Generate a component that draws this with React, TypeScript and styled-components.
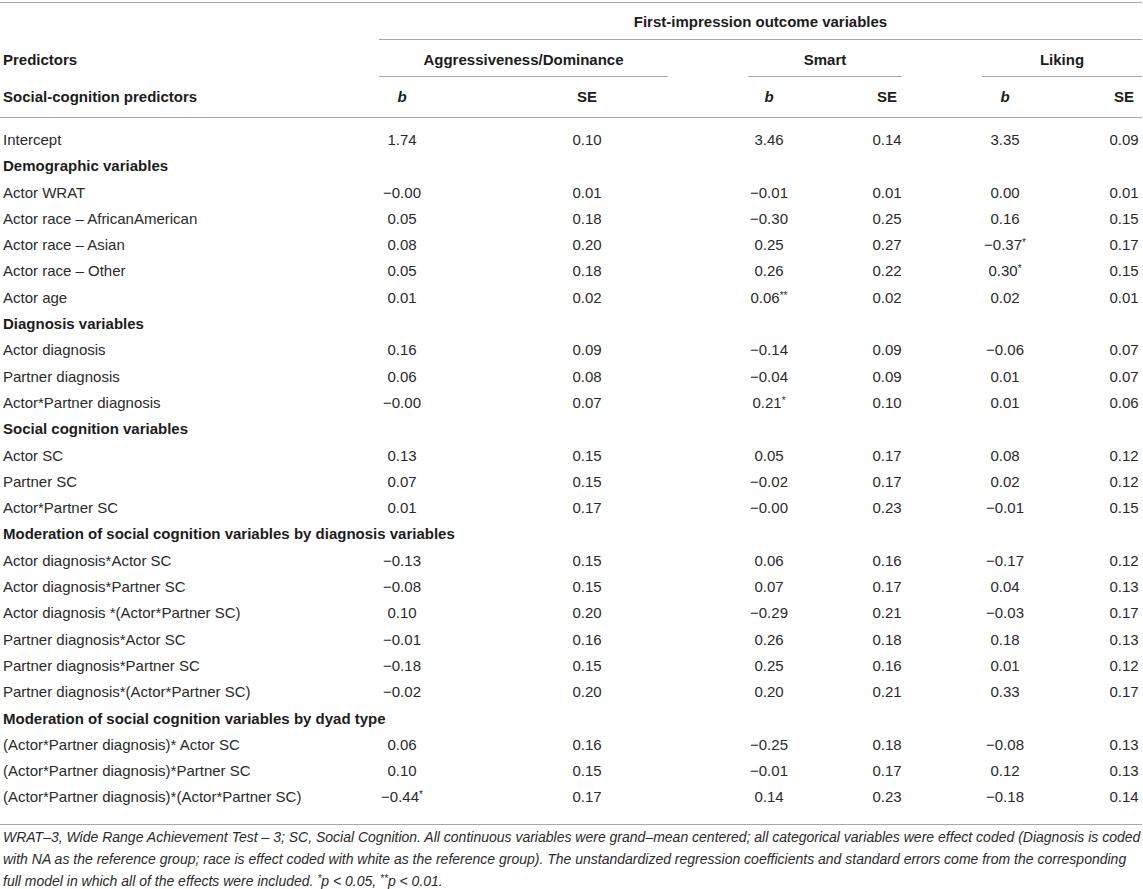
import React from 'react';
import styled, { createGlobalStyle, css } from 'styled-components';

const GlobalStyle = createGlobalStyle`
  html, body { margin: 0; padding: 0; background: #ffffff; }
  body {
    font-family: "Liberation Sans", Arial, Helvetica, sans-serif;
    color: #222222;
    -webkit-font-smoothing: antialiased;
  }
`;

const RULE = '1px solid #a8a8a8';

/* column lines: 0 | 379 | 425 | 564 | 610 | 668 | 748 | 790 | 866 | 908 | 982 | 1028 | 1106 | 1142 */
const tracks = css`
  display: grid;
  grid-template-columns: 379px 46px 139px 46px 58px 80px 42px 76px 42px 74px 46px 78px 36px;
`;

const Page = styled.div`
  padding-top: 2px;
  width: 1142px;
`;

const Table = styled.div`
  border-top: ${RULE};
  font-size: 15px;
`;

const HeadRow = styled.div<{ $rule?: boolean }>`
  ${tracks};
  border-bottom: ${(p) => (p.$rule ? RULE : 'none')};
`;

const HeadLabel = styled.div<{ $pad: string }>`
  grid-column: 1;
  padding: ${(p) => p.$pad};
  padding-left: 3px;
  line-height: 18px;
  font-weight: 700;
  color: #1c1c1c;
  align-self: start;
`;

const SpanHead = styled.div<{ $from: number; $to: number; $trim?: number }>`
  grid-column: ${(p) => p.$from} / ${(p) => p.$to};
  margin-right: ${(p) => p.$trim ?? 0}px;
  padding: 11px 0 7px;
  line-height: 18px;
  text-align: center;
  font-weight: 700;
  color: #1c1c1c;
  border-bottom: ${RULE};
`;

const TopSpan = styled(SpanHead)`
  padding: 10px 0 8px;
`;

const StatHead = styled.div<{ $col: number; $italic?: boolean }>`
  grid-column: ${(p) => p.$col};
  display: flex;
  justify-content: center;
  padding: 11px 0;
  line-height: 18px;
  font-weight: 700;
  font-style: ${(p) => (p.$italic ? 'italic' : 'normal')};
  color: #1c1c1c;
  white-space: nowrap;
`;

const Body = styled.div`
  padding: 9px 0 13px;
  border-bottom: ${RULE};
`;

const Row = styled.div`
  ${tracks};
  height: 26.3px;
  line-height: 26.3px;
`;

const Label = styled.div<{ $section?: boolean }>`
  grid-column: ${(p) => (p.$section ? '1 / 14' : '1')};
  padding-left: 3px;
  white-space: nowrap;
  font-weight: ${(p) => (p.$section ? 700 : 400)};
  color: ${(p) => (p.$section ? '#1c1c1c' : '#2a2a2a')};
`;

const Value = styled.div<{ $col: number }>`
  grid-column: ${(p) => p.$col};
  display: flex;
  justify-content: center;
  white-space: nowrap;
  color: #2a2a2a;
`;

const NumText = styled.span`
  display: inline;
`;

const Sup = styled.sup`
  font-size: 10px;
  line-height: 0;
  vertical-align: 4px;
`;

const Note = styled.p`
  margin: 0;
  padding: 1px 0 0 3px;
  font-size: 14px;
  line-height: 22px;
  font-style: italic;
  color: #2a2a2a;
  white-space: nowrap;
`;

const VALUE_COLS = [2, 4, 7, 9, 11, 13];

type DataRow = { label: string; values?: string[]; section?: boolean };

const rows: DataRow[] = [
  { label: 'Intercept', values: ['1.74', '0.10', '3.46', '0.14', '3.35', '0.09'] },
  { label: 'Demographic variables', section: true },
  { label: 'Actor WRAT', values: ['−0.00', '0.01', '−0.01', '0.01', '0.00', '0.01'] },
  { label: 'Actor race – AfricanAmerican', values: ['0.05', '0.18', '−0.30', '0.25', '0.16', '0.15'] },
  { label: 'Actor race – Asian', values: ['0.08', '0.20', '0.25', '0.27', '−0.37*', '0.17'] },
  { label: 'Actor race – Other', values: ['0.05', '0.18', '0.26', '0.22', '0.30*', '0.15'] },
  { label: 'Actor age', values: ['0.01', '0.02', '0.06**', '0.02', '0.02', '0.01'] },
  { label: 'Diagnosis variables', section: true },
  { label: 'Actor diagnosis', values: ['0.16', '0.09', '−0.14', '0.09', '−0.06', '0.07'] },
  { label: 'Partner diagnosis', values: ['0.06', '0.08', '−0.04', '0.09', '0.01', '0.07'] },
  { label: 'Actor*Partner diagnosis', values: ['−0.00', '0.07', '0.21*', '0.10', '0.01', '0.06'] },
  { label: 'Social cognition variables', section: true },
  { label: 'Actor SC', values: ['0.13', '0.15', '0.05', '0.17', '0.08', '0.12'] },
  { label: 'Partner SC', values: ['0.07', '0.15', '−0.02', '0.17', '0.02', '0.12'] },
  { label: 'Actor*Partner SC', values: ['0.01', '0.17', '−0.00', '0.23', '−0.01', '0.15'] },
  { label: 'Moderation of social cognition variables by diagnosis variables', section: true },
  { label: 'Actor diagnosis*Actor SC', values: ['−0.13', '0.15', '0.06', '0.16', '−0.17', '0.12'] },
  { label: 'Actor diagnosis*Partner SC', values: ['−0.08', '0.15', '0.07', '0.17', '0.04', '0.13'] },
  { label: 'Actor diagnosis *(Actor*Partner SC)', values: ['0.10', '0.20', '−0.29', '0.21', '−0.03', '0.17'] },
  { label: 'Partner diagnosis*Actor SC', values: ['−0.01', '0.16', '0.26', '0.18', '0.18', '0.13'] },
  { label: 'Partner diagnosis*Partner SC', values: ['−0.18', '0.15', '0.25', '0.16', '0.01', '0.12'] },
  { label: 'Partner diagnosis*(Actor*Partner SC)', values: ['−0.02', '0.20', '0.20', '0.21', '0.33', '0.17'] },
  { label: 'Moderation of social cognition variables by dyad type', section: true },
  { label: '(Actor*Partner diagnosis)* Actor SC', values: ['0.06', '0.16', '−0.25', '0.18', '−0.08', '0.13'] },
  { label: '(Actor*Partner diagnosis)*Partner SC', values: ['0.10', '0.15', '−0.01', '0.17', '0.12', '0.13'] },
  { label: '(Actor*Partner diagnosis)*(Actor*Partner SC)', values: ['−0.44*', '0.17', '0.14', '0.23', '−0.18', '0.14'] },
];

function Num({ text }: { text: string }) {
  const m = text.match(/^([^*]*)(\**)$/);
  const base = m ? m[1] : text;
  const stars = m ? m[2] : '';
  return (
    <NumText>
      {base}
      {stars && <Sup>{stars}</Sup>}
    </NumText>
  );
}

export default function App() {
  return (
    <Page>
      <GlobalStyle />
      <Table>
        <HeadRow>
          <TopSpan $from={2} $to={14}>First-impression outcome variables</TopSpan>
        </HeadRow>
        <HeadRow>
          <HeadLabel $pad="11px 0 7px">Predictors</HeadLabel>
          <SpanHead $from={2} $to={6}>Aggressiveness/Dominance</SpanHead>
          <SpanHead $from={7} $to={10} $trim={6}>Smart</SpanHead>
          <SpanHead $from={11} $to={14}>Liking</SpanHead>
        </HeadRow>
        <HeadRow $rule>
          <HeadLabel $pad="11px 0 11px">Social-cognition predictors</HeadLabel>
          <StatHead $col={2} $italic>b</StatHead>
          <StatHead $col={4}>SE</StatHead>
          <StatHead $col={7} $italic>b</StatHead>
          <StatHead $col={9}>SE</StatHead>
          <StatHead $col={11} $italic>b</StatHead>
          <StatHead $col={13}>SE</StatHead>
        </HeadRow>
        <Body>
          {rows.map((r) => (
            <Row key={r.label}>
              <Label $section={r.section}>{r.label}</Label>
              {r.values?.map((v, i) => (
                <Value key={i} $col={VALUE_COLS[i]}>
                  <Num text={v} />
                </Value>
              ))}
            </Row>
          ))}
        </Body>
      </Table>
      <Note>
        WRAT–3, Wide Range Achievement Test – 3; SC, Social Cognition. All continuous variables were grand–mean centered; all categorical variables were effect coded (Diagnosis is coded
        <br />
        with NA as the reference group; race is effect coded with white as the reference group). The unstandardized regression coefficients and standard errors come from the corresponding
        <br />
        full model in which all of the effects were included. <Sup>*</Sup>p &lt; 0.05, <Sup>**</Sup>p &lt; 0.01.
      </Note>
    </Page>
  );
}
